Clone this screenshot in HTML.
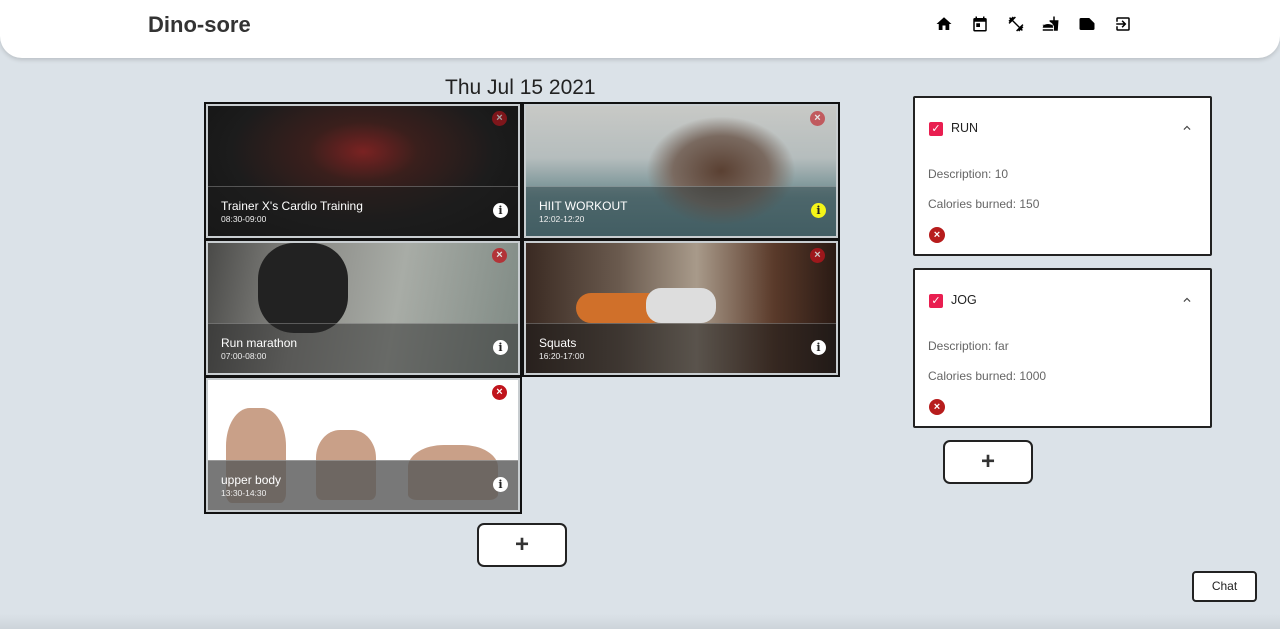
<!DOCTYPE html>
<html><head><style>
*{box-sizing:border-box;margin:0;padding:0}
body{width:1280px;height:629px;overflow:hidden;background:#dbe2e8;font-family:"Liberation Sans",Roboto,sans-serif;position:relative}
.hdr{position:absolute;left:0;top:0;width:1280px;height:58px;background:#fff;border-radius:0 0 22px 22px;box-shadow:0 2px 4px rgba(0,0,0,.15)}
.logo{position:absolute;left:148px;top:12px;font-size:22px;font-weight:bold;color:#333}
.ic{position:absolute;top:15px;width:18px;height:18px}
.date{position:absolute;left:445px;top:76px;font-size:21px;color:#222}
.tile{position:absolute;width:318px;height:138px;border:2px solid #111;padding:2px;background:#c8cdd0}
.img{position:relative;width:100%;height:100%;overflow:hidden}
.ov{position:absolute;left:0;right:0;top:80px;bottom:0;background:rgba(30,30,30,.55);border-top:1px solid rgba(255,255,255,.25)}
.t{position:absolute;left:13px;top:12px;color:#fff;font-size:12px}
.s{position:absolute;left:13px;top:27px;color:#eee;font-size:8.5px}
.info{position:absolute;right:10px;top:16px;width:15px;height:15px;border-radius:50%;background:#fff;color:#222;font-size:11px;font-weight:bold;text-align:center;line-height:15px;font-family:"DejaVu Serif",serif}
.x{position:absolute;right:11px;top:5px;width:15px;height:15px;border-radius:50%;background:#c0141c;color:#fff;font-size:11px;font-weight:bold;text-align:center;line-height:15px}
.card{position:absolute;left:913px;width:299px;background:#fff;border:2px solid #222;border-radius:2px}
.cb{position:absolute;left:14px;top:24px;width:14px;height:14px;background:#e91e50;border-radius:2px;color:#fff;font-size:11px;line-height:14px;text-align:center}
.ct{position:absolute;left:36px;top:23px;font-size:12.5px;color:#222}
.chev{position:absolute;right:16px;top:23px;width:14px;height:14px}
.d{position:absolute;left:13px;font-size:12px;color:#666}
.cx{position:absolute;left:14px;top:129px;width:16px;height:16px;border-radius:50%;background:#b71c1c;color:#fff;font-size:11px;font-weight:bold;text-align:center;line-height:16px}
.add{position:absolute;width:90px;height:44px;background:#fff;border:2px solid #222;border-radius:7px;text-align:center;line-height:40px;font-size:24px;font-weight:bold;color:#333}
.chat{position:absolute;left:1192px;top:571px;width:65px;height:31px;background:#fff;border:2px solid #222;border-radius:4px;font-size:12px;text-align:center;line-height:27px;color:#222}
.bot{position:absolute;left:0;top:614px;width:1280px;height:15px;background:linear-gradient(#dbe2e8,#cdd4da)}
.fig{position:absolute;background:#c9a088;border-radius:40% 40% 10% 10%}
</style></head><body>
<div class="hdr">
<div class="logo">Dino-sore</div>
<svg class="ic" style="left:935px" viewBox="0 0 24 24"><path d="M10 20v-6h4v6h5v-8h3L12 3 2 12h3v8z"/></svg>
<svg class="ic" style="left:971px" viewBox="0 0 24 24"><path d="M19 4h-1V2h-2v2H8V2H6v2H5a2 2 0 0 0-2 2v14a2 2 0 0 0 2 2h14a2 2 0 0 0 2-2V6a2 2 0 0 0-2-2zm0 16H5V9h14zM7 11h5v5H7z"/></svg>
<svg class="ic" style="left:1007px" viewBox="0 0 24 24"><path d="M20.6 14.9 22 13.5 20.6 12.1 17 15.7 8.3 7 11.9 3.4 10.5 2 9.1 3.4 7.7 2 5.5 4.2 4.1 2.8 2.7 4.2l1.4 1.4L2 7.7l1.4 1.4L2 10.5l1.4 1.4L7 8.3l8.7 8.7-3.6 3.6 1.4 1.4 1.4-1.4 1.4 1.4 2.1-2.1 1.4 1.4 1.4-1.4-1.4-1.4 2.1-2.1-1.4-1.4z"/></svg>
<svg class="ic" style="left:1042px" viewBox="0 0 24 24"><path d="M1 21h14v-2H1zm0-4h14c0-3-3-5-7-5s-7 2-7 5zm0-3h14v-1H1zm15 7h5l1-14h-5V2h-2v5h-5l.3 2.2C13 10.6 15.7 12.7 16 16v5z"/></svg>
<svg class="ic" style="left:1078px" viewBox="0 0 24 24"><path d="M15 4H4a2 2 0 0 0-2 2v12a2 2 0 0 0 2 2h16a2 2 0 0 0 2-2V11z"/></svg>
<svg class="ic" style="left:1114px" viewBox="0 0 24 24"><path d="M10.1 15.6 11.5 17l5-5-5-5-1.4 1.4 2.6 2.6H3v2h9.7zM19 3H5a2 2 0 0 0-2 2v4h2V5h14v14H5v-4H3v4a2 2 0 0 0 2 2h14a2 2 0 0 0 2-2V5a2 2 0 0 0-2-2z"/></svg>
</div>
<div class="date">Thu Jul 15 2021</div>

<div class="tile" style="left:204px;top:102px"><div class="img" style="background:radial-gradient(ellipse at 50% 35%,#7a2222 0,#3a1f1c 25%,#1c1c1c 60%,#121212 100%)">
<div class="ov"><div class="t">Trainer X's Cardio Training</div><div class="s">08:30-09:00</div><div class="info">i</div></div><div class="x" style="opacity:.6">×</div></div></div>

<div class="tile" style="left:522px;top:102px"><div class="img" style="background:linear-gradient(180deg,#c8c9c6 0,#b5bdbd 40%,#6c8a8e 70%,#587a80 100%)">
<div style="position:absolute;left:120px;top:10px;width:150px;height:110px;background:radial-gradient(ellipse,#5a4032 0,#7a6a60 45%,transparent 70%)"></div>
<div class="ov" style="background:rgba(40,60,65,.45)"><div class="t">HIIT WORKOUT</div><div class="s">12:02-12:20</div><div class="info" style="background:#f5f518">i</div></div><div class="x" style="opacity:.6">×</div></div></div>

<div class="tile" style="left:204px;top:239px"><div class="img" style="background:linear-gradient(100deg,#4a4a48 0,#8a8a86 30%,#a8aca6 60%,#7f8a84 100%)">
<div style="position:absolute;left:50px;top:0;width:90px;height:90px;background:#222;border-radius:40%"></div>
<div class="ov" style="background:rgba(40,40,40,.5)"><div class="t">Run marathon</div><div class="s">07:00-08:00</div><div class="info">i</div></div><div class="x" style="opacity:.75">×</div></div></div>

<div class="tile" style="left:522px;top:239px"><div class="img" style="background:linear-gradient(90deg,#3a2a22 0,#6a5a4e 30%,#a89a8a 55%,#5a3a2a 80%,#2a1a14 100%)">
<div style="position:absolute;left:50px;top:50px;width:90px;height:30px;background:#d0702a;border-radius:20px"></div>
<div style="position:absolute;left:120px;top:45px;width:70px;height:35px;background:#ddd;border-radius:15px"></div>
<div class="ov" style="background:rgba(25,25,25,.55)"><div class="t">Squats</div><div class="s">16:20-17:00</div><div class="info">i</div></div><div class="x" style="opacity:.75">×</div></div></div>

<div class="tile" style="left:204px;top:376px"><div class="img" style="background:#fff">
<div class="fig" style="left:18px;top:28px;width:60px;height:95px"></div>
<div class="fig" style="left:108px;top:50px;width:60px;height:70px"></div>
<div class="fig" style="left:200px;top:65px;width:90px;height:55px"></div>
<div class="ov" style="background:rgba(90,90,90,.82)"><div class="t">upper body</div><div class="s">13:30-14:30</div><div class="info">i</div></div><div class="x">×</div></div></div>

<div class="add" style="left:477px;top:523px">+</div>

<div class="card" style="top:96px;height:160px"><div class="cb">✓</div><div class="ct">RUN</div><svg class="chev" viewBox="0 0 24 24"><path d="M7.4 15.4 12 10.8l4.6 4.6L18 14l-6-6-6 6z" fill="#444"/></svg><div class="d" style="top:69px">Description: 10</div><div class="d" style="top:99px">Calories burned: 150</div><div class="cx">×</div></div>
<div class="card" style="top:268px;height:160px"><div class="cb">✓</div><div class="ct">JOG</div><svg class="chev" viewBox="0 0 24 24"><path d="M7.4 15.4 12 10.8l4.6 4.6L18 14l-6-6-6 6z" fill="#444"/></svg><div class="d" style="top:69px">Description: far</div><div class="d" style="top:99px">Calories burned: 1000</div><div class="cx">×</div></div>
<div class="add" style="left:943px;top:440px">+</div>
<div class="chat">Chat</div>
<div class="bot"></div>
</body></html>
